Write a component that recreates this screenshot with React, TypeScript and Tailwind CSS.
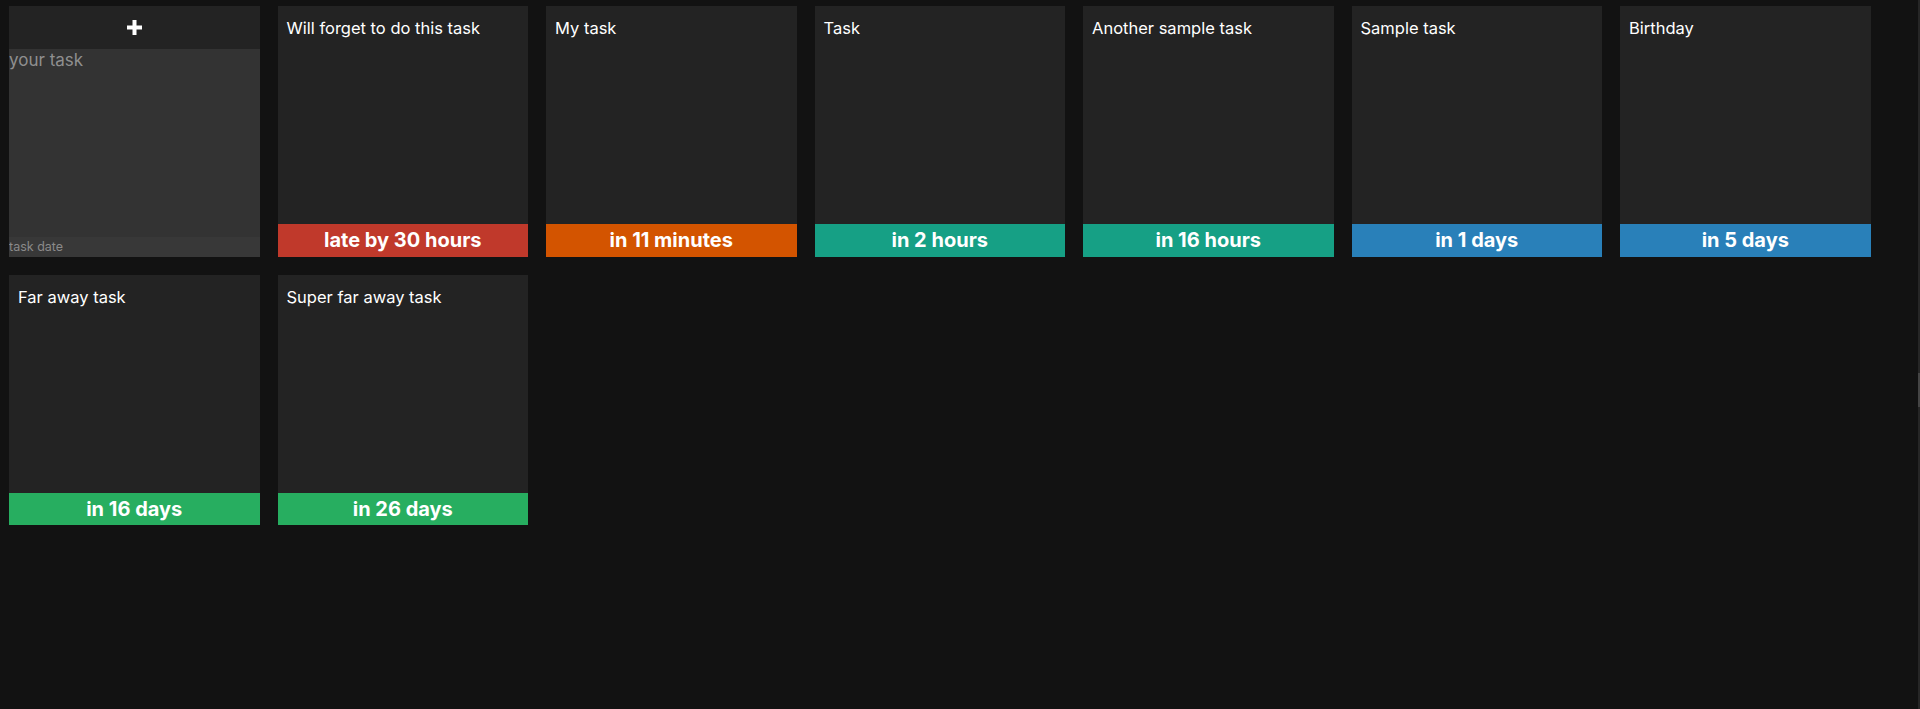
import React from "react";

type Task = { title: string; due: string; color: string };

const tasks: Task[] = [
  { title: "Will forget to do this task", due: "late by 30 hours", color: "bg-[#c0392b]" },
  { title: "My task", due: "in 11 minutes", color: "bg-[#d35400]" },
  { title: "Task", due: "in 2 hours", color: "bg-[#16a085]" },
  { title: "Another sample task", due: "in 16 hours", color: "bg-[#16a085]" },
  { title: "Sample task", due: "in 1 days", color: "bg-[#2980b9]" },
  { title: "Birthday", due: "in 5 days", color: "bg-[#2980b9]" },
  { title: "Far away task", due: "in 16 days", color: "bg-[#27ae60]" },
  { title: "Super far away task", due: "in 26 days", color: "bg-[#27ae60]" },
];

const NewTask: React.FC = () => (
  <div className="flex h-[250.5px] w-[250.5px] flex-col bg-[#232323]">
    <button className="flex h-[43px] shrink-0 items-center justify-center">
      <svg width="15" height="15" viewBox="0 0 15 15">
        <path d="M7.5 0v15M0 7.5h15" stroke="white" strokeWidth="4" />
      </svg>
    </button>
    <textarea
      placeholder="your task"
      className="flex-1 resize-none bg-[#333333] p-0 text-[17px] leading-[22px] text-white outline-none placeholder:text-[#8f8f8f]"
    />
    <input
      placeholder="task date"
      className="h-[19.5px] shrink-0 bg-[#383838] p-0 text-[12.5px] text-white outline-none placeholder:text-[#8a8a8a]"
    />
  </div>
);

const TaskCard: React.FC<{ task: Task }> = ({ task }) => (
  <div className="flex h-[250.5px] w-[250.5px] flex-col bg-[#232323]">
    <h3 className="flex-1 px-[9px] pt-[10px] text-[16.5px] leading-6 text-white">
      {task.title}
    </h3>
    <div
      className={`${task.color} flex h-[32.5px] items-center justify-center text-[20px] font-bold text-white`}
    >
      {task.due}
    </div>
  </div>
);

export default function App() {
  return (
    <div
      className="flex min-h-screen bg-[#121212]"
      style={{ fontFamily: "Inter, 'Noto Sans', sans-serif" }}
    >
      <main className="flex flex-1 flex-wrap content-start gap-[18px] pl-[9px] pt-[6px]">
        <NewTask />
        {tasks.map((t) => (
          <TaskCard key={t.title} task={t} />
        ))}
      </main>
      {/* scrollbar strip */}
      <div className="flex w-[2px] flex-col bg-[#262626]">
        <div className="h-[373px]" />
        <div className="h-[34px] bg-[#444444]" />
      </div>
    </div>
  );
}
